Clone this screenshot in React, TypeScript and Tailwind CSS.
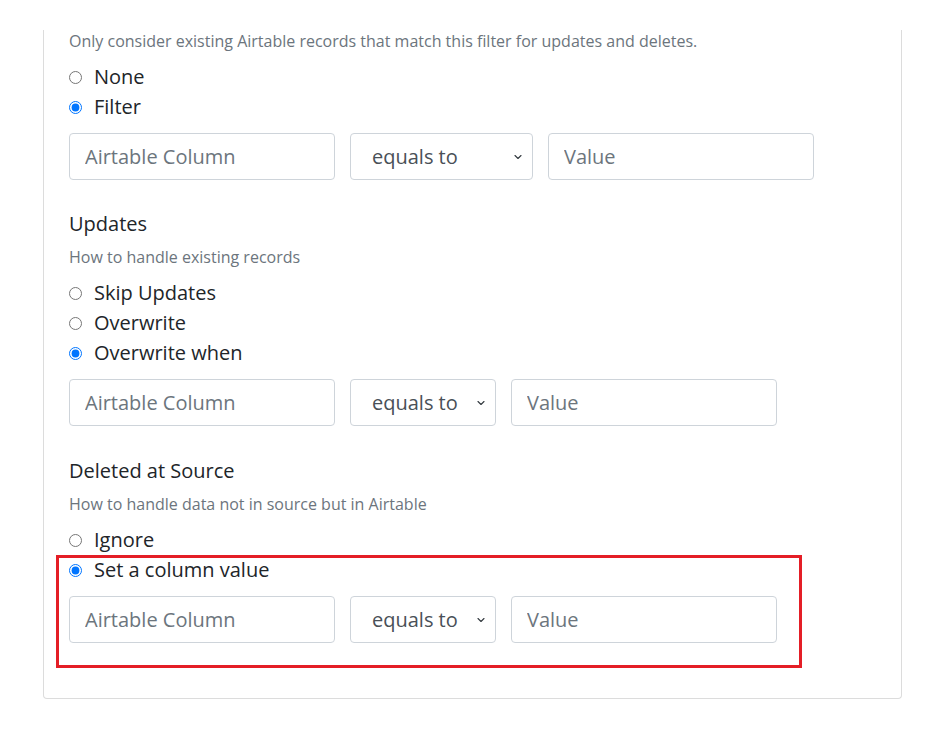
import { ChevronDown } from "lucide-react";

type RowProps = {
  selectWidth: string;
};

function ConditionRow({ selectWidth }: RowProps) {
  return (
    <div className="flex gap-[15px]">
      <input
        placeholder="Airtable Column"
        className="h-[47px] w-[266px] rounded-[4px] border border-[#ced4da] px-[15px] text-[20px] text-[#212529] outline-none placeholder:text-[#6c757d]"
      />
      <div className={`relative ${selectWidth}`}>
        <select className="h-[47px] w-full appearance-none rounded-[4px] border border-[#ced4da] bg-white pl-[21px] text-[20px] text-[#495057] outline-none">
          <option>equals to</option>
        </select>
        <ChevronDown
          className="pointer-events-none absolute right-[9px] top-[18px] h-3 w-3 text-[#343a40]"
          strokeWidth={2.25}
        />
      </div>
      <input
        placeholder="Value"
        className="h-[47px] w-[266px] rounded-[4px] border border-[#ced4da] px-[15px] text-[20px] text-[#212529] outline-none placeholder:text-[#6c757d]"
      />
    </div>
  );
}

function Radio({ label, name, checked }: { label: string; name: string; checked?: boolean }) {
  return (
    <label className="flex h-[30px] items-center gap-3 text-[20px] text-[#212529]">
      <input type="radio" name={name} defaultChecked={checked} className="m-0 h-[13px] w-[13px]" />
      <span>{label}</span>
    </label>
  );
}

export default function App() {
  return (
    <div className="min-h-[733px] bg-white pt-[30px] font-['Open_Sans',sans-serif]">
      <div className="relative mx-[43px] w-[859px] rounded-b-[4px] border-x border-b border-[#dcdcdc] px-[25px] pb-[55px]">
        <p className="h-[22px] text-[16px] leading-[22px] text-[#6c757d]">
          Only consider existing Airtable records that match this filter for updates and deletes.
        </p>
        <div className="mt-[10px]">
          <Radio name="filter" label="None" />
          <Radio name="filter" label="Filter" checked />
        </div>
        <div className="mt-[11px]">
          <ConditionRow selectWidth="w-[183px]" />
        </div>

        <h3 className="mt-[29px] text-[20px] leading-[30px] text-[#212529]">Updates</h3>
        <p className="mt-[6px] text-[16px] leading-[24px] text-[#6c757d]">How to handle existing records</p>
        <div className="mt-[9px]">
          <Radio name="updates" label="Skip Updates" />
          <Radio name="updates" label="Overwrite" />
          <Radio name="updates" label="Overwrite when" checked />
        </div>
        <div className="mt-[11px]">
          <ConditionRow selectWidth="w-[146px]" />
        </div>

        <h3 className="mt-[30px] text-[20px] leading-[30px] text-[#212529]">Deleted at Source</h3>
        <p className="mt-[6px] text-[16px] leading-[24px] text-[#6c757d]">
          How to handle data not in source but in Airtable
        </p>
        <div className="mt-[9px]">
          <Radio name="deleted" label="Ignore" />
          <Radio name="deleted" label="Set a column value" checked />
        </div>
        <div className="mt-[11px]">
          <ConditionRow selectWidth="w-[146px]" />
        </div>

        <div className="pointer-events-none absolute left-[12px] top-[525px] h-[113px] w-[746px] border-[3px] border-[#e41e26]" />
      </div>
    </div>
  );
}
